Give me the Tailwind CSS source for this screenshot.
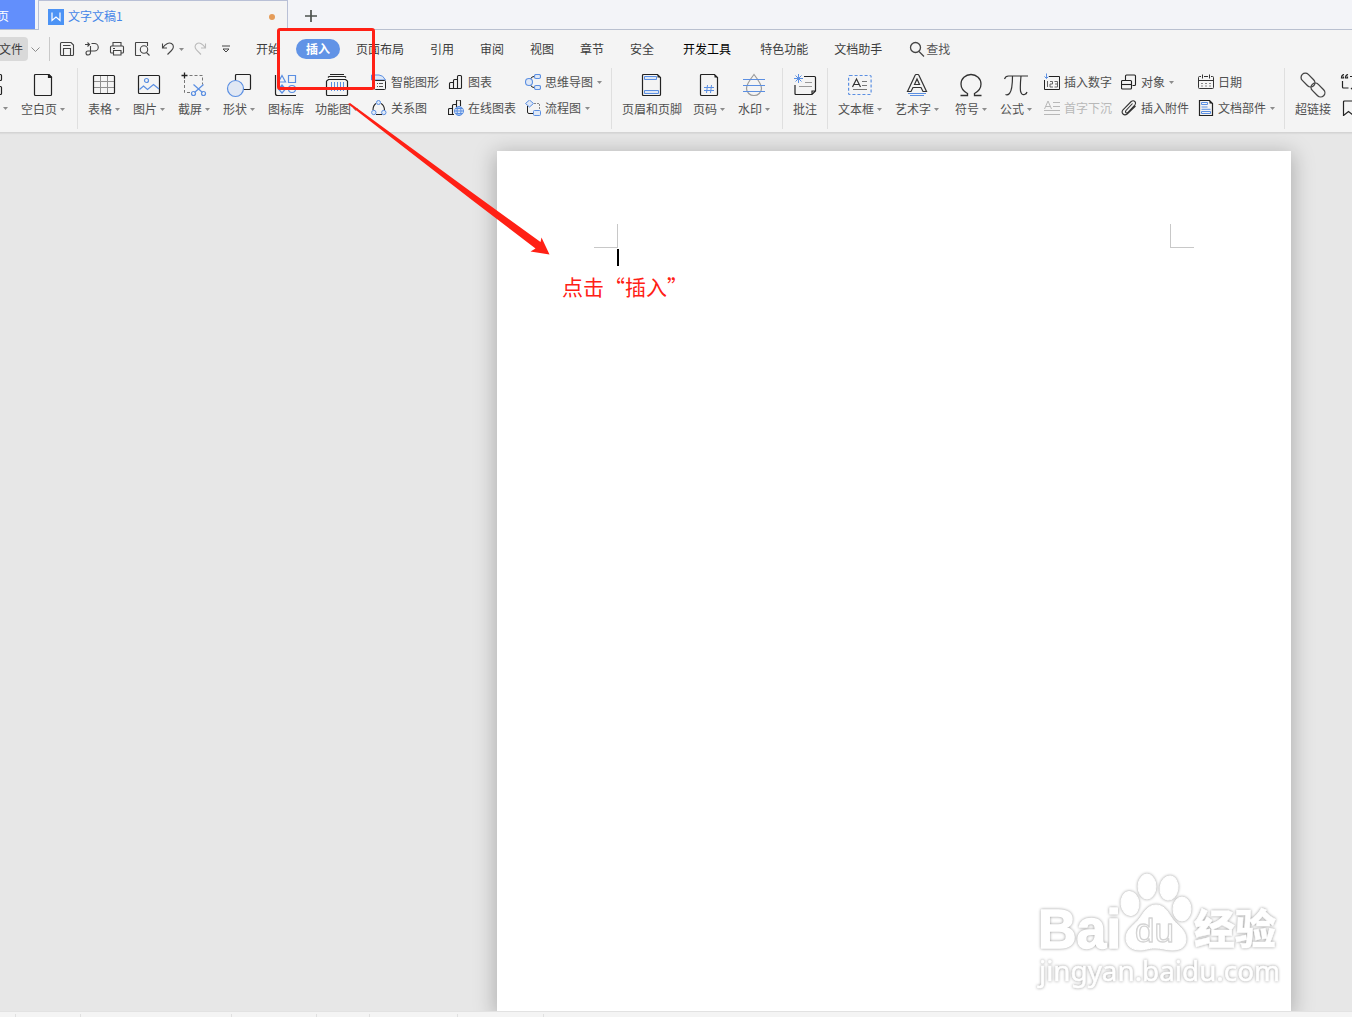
<!DOCTYPE html>
<html lang="zh-CN">
<head>
    <meta charset="UTF-8">
    <meta name="viewport" content="width=device-width, initial-scale=1.0">
    <title>文字文稿1</title>
    <script src="https://cdn.jsdelivr.net/npm/@tailwindcss/browser@4"></script>
</head>
<body class="relative flex h-[1017px] w-[1352px] flex-col overflow-hidden bg-[#e7e7e7] font-['Noto_Sans_CJK_SC',sans-serif] text-[12px] leading-4 whitespace-nowrap text-[#505050]">
    <svg class="hidden">
        <symbol id="caret" viewBox="0 0 5 3"><path d="M0 0h5L2.5 3z" fill="#8c8c8c"/></symbol>
    </svg>

    <!-- Document tabs -->
    <div class="flex h-[30px] shrink-0 border-b border-[#b9c0d0] bg-[#f3f4f8]">
        <div class="flex h-[29px] w-[35px] items-center bg-[#628ffc] pt-[2px] text-white"><span class="-ml-[3px]">页</span></div>
        <div class="ml-[3px] flex h-[30px] w-[250px] items-center border-x border-t border-[#b9c0d6] bg-[#f4f4f4] pr-3 pl-[9px] pt-[2px]">
            <svg class="size-4" viewBox="0 0 16 16" fill="none"><path d="M0 0h16v16H0z" fill="#4c93f5"/><path d="M4 3.500v8L8 8l4 3.500v-8" stroke="#fff" stroke-width="1.2"/></svg>
            <span class="mb-[2px] ml-1 text-[#4586e8]">文字文稿1</span>
            <span class="ml-auto size-1.5 rounded-full bg-[#e59c58]"></span>
        </div>
        <svg class="mt-[10px] ml-[17px] size-3" viewBox="0 0 12 12"><path d="M6 0v12M0 6h12" stroke="#4c514e" stroke-width="1.7"/></svg>
    </div>

    <!-- Menu bar -->
    <div class="flex h-[38px] shrink-0 items-center bg-[#f4f4f4] text-[#3c3c3c]">
        <div class="flex h-6 w-7 items-center rounded-r bg-[#d9d9d9]"><span class="-ml-px">文件</span></div>
        <svg class="ml-[3px] h-[5px] w-[9px]" viewBox="0 0 9 5" fill="none" stroke="#8c8c8c"><path d="M.5.5l4 4 4-4"/></svg>
        <div class="ml-[9px] h-6 w-px bg-[#c9c9c9]"></div>
        <svg class="ml-[9px] h-4 w-4" viewBox="0 0 16 16" fill="none" stroke="#444" stroke-width="1.100"><path d="M2.500 1.500H12l2.500 2.500v9.500q0 1-1 1h-11q-1 0-1-1v-11q0-1 1-1zM4 4.500h7.500M4.500 14V7.500h7V14"/></svg>
        <svg class="ml-[9px] h-4 w-4" viewBox="0 0 16 16" fill="none" stroke="#444" stroke-width="1.100"><path d="M1 3.500h4.500M3.500 1.500l2 2-2 2M7.500 2.500h3a3.500 3.500 0 0 1 0 7.500H4a2 2 0 0 0 0 4q2.500 0 2.500-2.500V5"/></svg>
        <svg class="ml-[9px] h-4 w-4" viewBox="0 0 16 16" fill="none" stroke="#444" stroke-width="1.100"><path d="M4 5V1.500h8V5M4 12H2.500Q1.500 12 1.500 11V6q0-1 1-1h11q1 0 1 1v5q0 1-1 1H12M4.500 9.500h7.500v4.500H4.500zM4 7.500h2"/></svg>
        <svg class="ml-[9px] h-4 w-4" viewBox="0 0 16 16" fill="none" stroke="#444" stroke-width="1.100"><path d="M7 14.500H2q-.5 0-.5-.5V2q0-.5.500-.5h11.500V5"/><circle cx="10" cy="8.500" r="3.700"/><path d="M12.500 11.500l3 3"/></svg>
        <svg class="ml-[11px] h-4 w-4" viewBox="0 0 16 16" fill="none" stroke="#444" stroke-width="1.100"><path d="M1.500 2.500V7h4.500M1.800 6.800C4 3 8 1 10.500 2.500c3 2 2 5 0 7L6.500 13.500"/></svg>
        <svg class="ml-[2px] h-[3px] w-[5px]"><use href="#caret"/></svg>
        <svg class="ml-[9px] h-4 w-4" viewBox="0 0 16 16" fill="none" stroke="#bbb" stroke-width="1.100"><path d="M12.500 2.500V7H8M12.200 6.800C10 3 6.500 1 4 2.500c-3 2-2 4.500-.5 6.500l4.500 4.500"/></svg>
        <svg class="ml-[13px] h-2 w-2" viewBox="0 0 8 8" fill="none" stroke="#444"><path d="M0 1h8M1 4h6L4 7z"/></svg>
        <span class="ml-[26px]">开始</span>
        <span class="ml-4 flex h-5 w-11 items-center justify-center rounded-full bg-[#6193e6] font-bold text-white">插入</span>
        <span class="ml-4">页面布局</span>
        <span class="ml-[26px]">引用</span>
        <span class="ml-[26px]">审阅</span>
        <span class="ml-[26px]">视图</span>
        <span class="ml-[26px]">章节</span>
        <span class="ml-[26px]">安全</span>
        <span class="ml-[29px] text-black">开发工具</span>
        <span class="ml-[29px]">特色功能</span>
        <span class="ml-[26px]">文档助手</span>
        <svg class="ml-[27px] size-4" viewBox="0 0 16 16" fill="none" stroke="#444" stroke-width="1.300"><circle cx="6.500" cy="6.500" r="5"/><path d="M10 10.500l5 5"/></svg>
        <span class="ml-px text-[#555]">查找</span>
    </div>

    <!-- Ribbon -->
    <div class="flex h-[65px] shrink-0 border-b border-[#d4d4d4] bg-[#f4f4f4] shadow-[0_1px_1px_#dcdcdc]">
        <div class="flex w-2 flex-col items-start pt-[5px]">
            <svg class="-ml-[10px] h-6 w-6" viewBox="0 0 24 24" fill="none" stroke="#222" stroke-width="1.200"><path d="M3 1.500h7.500q1 0 1 1v4q0 1-1 1H3M3 13.500h7.500q1 0 1 1v6q0 1-1 1H3"/></svg>
            <svg class="mt-[10px] ml-[3px] h-[3px] w-[5px]"><use href="#caret"/></svg>
        </div>
        <div class="ml-[13px] flex flex-col items-center pt-[5px]">
            <svg class="size-6" viewBox="0 0 24 24" fill="none" stroke="#222" stroke-width="1.200"><path d="M4.500 1.500h13l3 3v17q0 1-1 1h-15q-1 0-1-1v-19q0-1 1-1z"/><path d="M17.500 1.500h.5l2.500 2.500v.5h-3z" fill="#222"/></svg>
            <span class="mt-1 flex items-center gap-[3px]">空白页<svg class="h-[3px] w-[5px]"><use href="#caret"/></svg></span>
        </div>
        <div class="ml-3 h-[61px] w-px bg-[#dfdfdf]"></div>

        <div class="ml-[10px] flex flex-col items-center pt-[5px]">
            <svg class="size-6" viewBox="0 0 24 24" fill="none"><path d="M1.500 8.500h21M1.500 14.500h21M8.500 2.500v12M15.500 8.500v12M8.500 14.500v6M15.500 2.500v6" stroke="#909090"/><rect x="1.500" y="2.500" width="21" height="18" rx="1" stroke="#222" stroke-width="1.200"/></svg>
            <span class="mt-1 flex items-center gap-[3px]">表格<svg class="h-[3px] w-[5px]"><use href="#caret"/></svg></span>
        </div>
        <div class="ml-[13px] flex flex-col items-center pt-[5px]">
            <svg class="size-6" viewBox="0 0 24 24" fill="none"><rect x="1.500" y="2.500" width="21" height="18" rx="1" stroke="#222" stroke-width="1.200"/><path d="M2.500 16.500l4-3.500 4 3.500 6-5 5.500 4.500" stroke="#5b8fe2" stroke-width="1.200"/><circle cx="9.500" cy="7.500" r="2" stroke="#5b8fe2" stroke-width="1.200"/></svg>
            <span class="mt-1 flex items-center gap-[3px]">图片<svg class="h-[3px] w-[5px]"><use href="#caret"/></svg></span>
        </div>
        <div class="ml-[13px] flex flex-col items-center pt-[5px]">
            <svg class="size-6 overflow-visible" viewBox="0 0 24 24" fill="none"><path d="M7.500 2.500h13v9M2.500 7v12.500h6" stroke="#777" stroke-dasharray="3 2"/><path d="M2.500-.5v6M-.5 2.500h6" stroke="#222" stroke-width="1.300"/><g stroke="#5b8fe2" stroke-width="1.200"><path d="M11.500 11.500l9 8M21.500 11.500l-9 8"/><circle cx="11.500" cy="20.500" r="2"/><circle cx="21.500" cy="20.500" r="2"/></g></svg>
            <span class="mt-1 flex items-center gap-[3px]">截屏<svg class="h-[3px] w-[5px]"><use href="#caret"/></svg></span>
        </div>
        <div class="ml-[13px] flex flex-col items-center pt-[5px]">
            <svg class="size-6 overflow-visible" viewBox="0 0 24 24" fill="none"><rect x="8.500" y="1.500" width="15" height="15" rx="1" stroke="#222" stroke-width="1.200"/><circle cx="8.500" cy="15.500" r="8" fill="#e1e8f4" stroke="#5b8fe2" stroke-width="1.200"/></svg>
            <span class="mt-1 flex items-center gap-[3px]">形状<svg class="h-[3px] w-[5px]"><use href="#caret"/></svg></span>
        </div>
        <div class="ml-[13px] flex flex-col items-center pt-[5px]">
            <svg class="size-6" viewBox="0 0 24 24" fill="none"><path d="M1.500 2v18.500q0 2 2 2H22" stroke="#222" stroke-width="1.200"/><g stroke="#5b8fe2" stroke-width="1.200"><path d="M8 2.500l3.500 6.500h-7zM14.500 2.500h7v7h-7zM8 12l3.500 4L8 20l-3.500-4z"/><circle cx="18" cy="16" r="3.500"/></g></svg>
            <span class="mt-1">图标库</span>
        </div>
        <div class="ml-[11px] flex flex-col items-center pt-[5px]">
            <svg class="size-6" viewBox="0 0 24 24" fill="none"><path d="M5 1.500h14M3 4.500l1-1h16l1 1M1.500 8l2-1.500h17l2 1.500M1.500 8v13.500q0 1 1 1h19q1 0 1-1V8" stroke="#222" stroke-width="1.200"/><path d="M6.500 9v9M9.500 9v9M12.500 9v9M15.500 9v9M18.500 9v9" stroke="#5b8fe2"/></svg>
            <span class="mt-1 flex items-center gap-[2px]">功能图<svg class="h-[3px] w-[5px]"><use href="#caret"/></svg></span>
        </div>

        <div class="ml-[13px] flex flex-col gap-[10px] pt-[6px]">
            <div class="flex items-center gap-1">
                <svg class="size-4" viewBox="0 0 16 16" fill="none"><path d="M.5 1H8q4 0 6.500 5H.5z" fill="#dfe8f6" stroke="#5b8fe2"/><rect x="3.500" y="6.500" width="11" height="9" rx="1" fill="#f4f4f4" stroke="#222"/><path d="M6 9.500h1M8 9.500h4M6 12.500h1M8 12.500h4" stroke="#555"/></svg>智能图形
            </div>
            <div class="flex items-center gap-1">
                <svg class="size-4" viewBox="0 0 16 16" fill="none"><path d="M5 3.500Q2 5.500 2 10M10 3.500q3.500 2 3.500 7M5 14.500h6" stroke="#222" stroke-width="1.100"/><g fill="#dfe8f6" stroke="#5b8fe2"><circle cx="7.500" cy="2.500" r="2"/><circle cx="2.800" cy="12.500" r="2.200"/><circle cx="12.800" cy="12.500" r="2.200"/></g></svg>关系图
            </div>
        </div>
        <div class="ml-[9px] flex flex-col gap-[10px] pt-[6px]">
            <div class="flex items-center gap-1">
                <svg class="size-4" viewBox="0 0 16 16" fill="none" stroke="#222" stroke-width="1.100"><path d="M1.500 14.500v-5q0-1 1-1h3v6zM5.500 14.500v-8q0-1 1-1h3v9zM9.500 14.500V2.500q0-1 1-1h2q1 0 1 1v11q0 1-1 1z"/></svg>图表
            </div>
            <div class="flex items-center gap-1">
                <svg class="size-4" viewBox="0 0 16 16" fill="none"><path d="M6 14.500H.5v-5q0-1 1-1h3v6M4.500 9V5.500q0-1 1-1h3V7M8.500 6V1q0-1 1-1h2q1 0 1 1v5" stroke="#222" stroke-width="1.100"/><g stroke="#5b8fe2"><circle cx="11" cy="11" r="4.500" fill="#dfe8f6"/><ellipse cx="11" cy="11" rx="2" ry="4.500"/><path d="M6.500 11h9M7.500 8.500h7M7.500 13.500h7"/></g></svg>在线图表
            </div>
        </div>
        <div class="ml-[9px] flex flex-col gap-[10px] pt-[6px]">
            <div class="flex items-center">
                <svg class="size-4" viewBox="0 0 16 16" fill="none"><path d="M5.500 5Q6.500 2.500 9 2.500M5.500 11q1 2.500 3.500 2.500" stroke="#222"/><g fill="#dfe8f6" stroke="#5b8fe2" stroke-width="1.100"><circle cx="4" cy="8" r="3.500"/><rect x="9.500" y=".5" width="6" height="4" rx="1.500"/><rect x="9.500" y="11.500" width="6" height="4" rx="1.500"/></g></svg>
                <span class="ml-1">思维导图</span><svg class="ml-1 h-[3px] w-[5px]"><use href="#caret"/></svg>
            </div>
            <div class="flex items-center">
                <svg class="size-4" viewBox="0 0 16 16" fill="none"><path d="M2.500 6v6q0 1.500 1.500 1.500h4" stroke="#222"/><path d="M9 3.500h5.500v6" stroke="#888" stroke-dasharray="2 1"/><g fill="#dfe8f6" stroke="#5b8fe2"><path d="M4.500 0L8.500 3.500l-4 3.500L.5 3.500z"/><rect x="8.500" y="10.500" width="7" height="5" rx="1"/></g></svg>
                <span class="ml-1">流程图</span><svg class="ml-1 h-[3px] w-[5px]"><use href="#caret"/></svg>
            </div>
        </div>
        <div class="ml-[9px] h-[61px] w-px bg-[#dfdfdf]"></div>

        <div class="ml-[10px] flex flex-col items-center pt-[5px]">
            <svg class="size-6" viewBox="0 0 24 24" fill="none"><path d="M3.500 1.500h14l3 3v17q0 1-1 1h-16q-1 0-1-1v-19q0-1 1-1z" stroke="#222" stroke-width="1.200"/><path d="M17.500 1.500l3 3h-3z" fill="#222"/><path d="M4.500 3.500h12v3h-12zM4.500 17.500h14v3h-14z" fill="#dfe8f6" stroke="#5b8fe2"/></svg>
            <span class="mt-1">页眉和页脚</span>
        </div>
        <div class="ml-[11px] flex flex-col items-center pt-[5px]">
            <svg class="size-6" viewBox="0 0 24 24" fill="none"><path d="M4.500 1.500h13l3 3v17q0 1-1 1h-15q-1 0-1-1v-19q0-1 1-1z" stroke="#222" stroke-width="1.200"/><path d="M17.500 1.500l3 3h-3z" fill="#222"/><path d="M7 14.500h10M7 17.500h10M10.500 12l-1 8M14.500 12l-1 8" stroke="#5b8fe2"/></svg>
            <span class="mt-1 flex items-center gap-[3px]">页码<svg class="h-[3px] w-[5px]"><use href="#caret"/></svg></span>
        </div>
        <div class="ml-[13px] flex flex-col items-center pt-[5px]">
            <svg class="size-6" viewBox="0 0 24 24" fill="none"><path d="M12 1.500Q4.500 11 4.500 15.500a7.500 7 0 0 0 15 0Q19.500 11 12 1.500z" stroke="#999" stroke-width="1.200"/><path d="M1 6.500h22M1 12.500h22M1 18.500h22" stroke="#5b8fe2" stroke-width="1.100"/></svg>
            <span class="mt-1 flex items-center gap-[3px]">水印<svg class="h-[3px] w-[5px]"><use href="#caret"/></svg></span>
        </div>
        <div class="ml-3 h-[61px] w-px bg-[#dfdfdf]"></div>

        <div class="ml-[10px] flex flex-col items-center pt-[5px]">
            <svg class="size-6" viewBox="0 0 24 24" fill="none"><path d="M11 3.500h10.500q1 0 1 1V18L19 21.500H3q-1 0-1-1V12M19 21.500V18h3.500" stroke="#222" stroke-width="1.200"/><path d="M12 9.500h7M6 13.500h13" stroke="#999"/><path d="M5.500 1v9M1 5.500h9M2.500 2.500l6 6M8.500 2.500l-6 6" stroke="#5b8fe2"/></svg>
            <span class="mt-1">批注</span>
        </div>
        <div class="ml-[10px] h-[61px] w-px bg-[#dfdfdf]"></div>

        <div class="ml-[10px] flex flex-col items-center pt-[5px]">
            <svg class="size-6" viewBox="0 0 24 24" fill="none"><rect x=".6" y="2.500" width="22.500" height="19" rx="1" stroke="#5b8fe2" stroke-width="1.200" stroke-dasharray="3 2"/><path d="M4.500 14l4-8 4 8M6 11.500h5" stroke="#333" stroke-width="1.200"/><path d="M14 8.500h5M14 12.500h5M5 16.500h14" stroke="#777"/></svg>
            <span class="mt-1 flex items-center gap-[3px]">文本框<svg class="h-[3px] w-[5px]"><use href="#caret"/></svg></span>
        </div>
        <div class="ml-[13px] flex flex-col items-center pt-[5px]">
            <svg class="size-6" viewBox="0 0 24 24" fill="none"><path d="M2.500 18.500l7.500-16q.5-1 1-1h2q.5 0 1 1l7.500 16H18l-2-4H8l-2 4zM9.500 11.500L12 6l2.500 5.500z" stroke="#333" stroke-width="1.200"/><path d="M3 20.500h18M5 22.500h14" stroke="#5b8fe2" stroke-width="1.100"/></svg>
            <span class="mt-1 flex items-center gap-[3px]">艺术字<svg class="h-[3px] w-[5px]"><use href="#caret"/></svg></span>
        </div>
        <div class="ml-4 flex flex-col items-center pt-[5px]">
            <svg class="size-6" viewBox="0 0 24 24" fill="none"><path d="M1.500 22.500h7v-2Q2 17 2 11a10 9.500 0 0 1 20 0q0 6-6.500 9.500v2h7" stroke="#333" stroke-width="1.300"/></svg>
            <span class="mt-1 flex items-center gap-[3px]">符号<svg class="h-[3px] w-[5px]"><use href="#caret"/></svg></span>
        </div>
        <div class="ml-[13px] flex flex-col items-center pt-[5px]">
            <svg class="size-6 overflow-visible" viewBox="0 0 24 24" fill="none"><path d="M.5 6q1-3 4-3H24M8.500 3q0 14-3 17.500-2 2-4 1M17 3q-1 10-.5 15 1 4.500 4 3.500 2-.5 2.500-2.500" stroke="#333" stroke-width="1.200"/></svg>
            <span class="mt-1 flex items-center gap-[3px]">公式<svg class="h-[3px] w-[5px]"><use href="#caret"/></svg></span>
        </div>

        <div class="ml-3 flex flex-col gap-[10px] pt-[6px]">
            <div class="flex items-center gap-1">
                <svg class="size-4 overflow-visible" viewBox="0 0 16 16" fill="none"><path d="M5 2.500h10.500v13H.5V6" stroke="#222"/><path d="M2.500-.5v5M.5 2.500l2 2 2-2" stroke="#5b8fe2"/><path d="M3.500 7v6M6 7.500h2.500v2.500H6v3h3M10.500 7.500h3v5.500h-3M11 10h2.500" stroke="#555" stroke-width=".9"/></svg>插入数字
            </div>
            <div class="flex items-center gap-1 text-[#b8b8b8]">
                <svg class="size-4" viewBox="0 0 16 16" fill="none" stroke="#b8b8b8"><path d="M.5 9l3.500-8 3.500 8M2 6.500h4M9 2.500h7M9 6.500h7M0 10.500h16M0 14.500h16"/></svg>首字下沉
            </div>
        </div>
        <div class="ml-[9px] flex flex-col gap-[10px] pt-[6px]">
            <div class="flex items-center">
                <svg class="size-4" viewBox="0 0 16 16" fill="none" stroke="#222" stroke-width="1.100"><path d="M4.500 6V2q0-1 1-1h8q1 0 1 1v8.500q0 1-1 1h-2"/><rect x=".5" y="6.500" width="10" height="8.500" rx="1"/><path d="M.5 10.500h10"/></svg>
                <span class="ml-1">对象</span><svg class="ml-1 h-[3px] w-[5px]"><use href="#caret"/></svg>
            </div>
            <div class="flex items-center gap-1">
                <svg class="size-4" viewBox="0 0 16 16" fill="none" stroke="#333" stroke-width="1.100"><path d="M11.500 3.500L5 10.500q-1 1.500 0 2.200t2-.4L13.800 5q1.500-2 0-3.500t-3.600 0L2 9.800q-1.800 2.500 0 4.200t4.200 0L14.500 6"/></svg>插入附件
            </div>
        </div>
        <div class="ml-[9px] flex flex-col gap-[10px] pt-[6px]">
            <div class="flex items-center gap-1">
                <svg class="size-4" viewBox="0 0 16 16" fill="none" stroke="#333"><path d="M3 2.500H1.500q-1 0-1 1v10q0 1 1 1h13q1 0 1-1v-10q0-1-1-1H13M6 2.500h4M4.500.5v4M11.500.5v4M.5 6.500h15"/><path d="M3 9.500h2M7 9.500h2M11 9.500h2M3 12h2M7 12h2M11 12h2" stroke="#888"/></svg>日期
            </div>
            <div class="flex items-center">
                <svg class="size-4" viewBox="0 0 16 16" fill="none"><path d="M1.500.5h10l3 3v12h-13z" stroke="#222" stroke-width="1.200"/><path d="M11.500.5v3h3z" fill="#222"/><path d="M3.500 2.500h6v2h-6zM3.500 11.500h9v2h-9zM3.500 7h6M3.500 9.300h9" stroke="#5b8fe2"/></svg>
                <span class="ml-1">文档部件</span><svg class="ml-1 h-[3px] w-[5px]"><use href="#caret"/></svg>
            </div>
        </div>
        <div class="ml-[9px] h-[61px] w-px bg-[#dfdfdf]"></div>

        <div class="ml-[10px] flex flex-col items-center pt-[5px]">
            <svg class="size-6 overflow-visible" viewBox="0 0 24 24" fill="none" stroke="#444" stroke-width="1.300"><rect x="-1" y="2.800" width="16" height="8.500" rx="4.250" transform="rotate(45 7 7)"/><rect x="9" y="12.800" width="16" height="8.500" rx="4.250" transform="rotate(45 17 17)"/></svg>
            <span class="mt-1">超链接</span>
        </div>
        <div class="ml-[9px] flex w-3 shrink-0 flex-col gap-[10px] overflow-hidden pt-[6px]">
            <svg class="size-4 shrink-0" viewBox="0 0 16 16" fill="none"><path d="M4 .5Q1.500 1 1.500 4h2V2.500M8 .5Q5.500 1 5.500 4h2V2.500M10 2.500h5M2.500 7v6q0 1 1 1h5M11 14l2 2" stroke="#222" stroke-width="1.200"/></svg>
            <svg class="size-4 shrink-0" viewBox="0 0 16 16" fill="none"><path d="M3.500 15.500V2q0-1 1-1h9v14.500l-5-4z" stroke="#222" stroke-width="1.200"/></svg>
        </div>
    </div>

    <!-- Workspace -->
    <main class="min-h-0 flex-1 overflow-hidden pt-[18px]">
        <div class="relative ml-[497px] h-[860px] w-[794px] bg-white shadow-[0_4px_20px_2px_rgba(0,0,0,0.25)]">
            <div class="absolute top-[73px] left-[97px] h-6 w-6 border-r border-b border-[#c8c8c8]"></div>
            <div class="absolute top-[73px] left-[673px] h-6 w-6 border-b border-l border-[#c8c8c8]"></div>
            <div class="absolute top-[98px] left-[120px] h-[17px] w-[2px] bg-black"></div>
            <p class="absolute top-[120px] left-[65px] text-[21px] leading-[30px] text-[#ff2015]">点击“插入”</p>
            <svg class="absolute top-[709px] left-[523px] h-[150px] w-[270px] drop-shadow-[0_0_1.5px_rgba(0,0,0,0.4)]" viewBox="1020 860 270 150" fill="#fff" stroke="#fff" stroke-linejoin="round">
                <text x="1038" y="948" font-family="Liberation Sans" font-weight="700" font-size="56" textLength="83" lengthAdjust="spacingAndGlyphs" stroke-width="1.500">Bai</text>
                <ellipse cx="1130" cy="903.500" rx="9" ry="12" transform="rotate(-6 1130 903.500)"/>
                <ellipse cx="1147" cy="886.500" rx="9" ry="12.500"/>
                <ellipse cx="1169" cy="888" rx="9" ry="12" transform="rotate(8 1169 888)"/>
                <ellipse cx="1182" cy="909" rx="9" ry="12"/>
                <path d="M1156 905c7 0 11 5 15 12 5 8 15 12 15 22 0 9-7 11-14 11-6 0-10-2-17-2s-9 2-15 2c-9 0-14-5-14-12 0-9 9-13 14-20 4-6 8-13 16-13z"/>
                <text x="1194" y="944" font-family="Noto Sans CJK SC" font-weight="900" font-size="41" textLength="82" stroke-width=".5">经验</text>
                <text x="1039" y="981" font-family="Noto Sans" font-size="28" textLength="241" lengthAdjust="spacingAndGlyphs" stroke-width=".6">jingyan.baidu.com</text>
                <text x="1135" y="942" font-family="Liberation Sans" font-weight="400" font-size="34" textLength="39" lengthAdjust="spacingAndGlyphs" stroke="#d4d4d4" stroke-width="1.300">du</text>
            </svg>
        </div>
    </main>

    <!-- Status bar -->
    <footer class="h-[6px] shrink-0 border-t border-[#e2e2e2] bg-[#f4f4f4] pt-[2px]">
        <div class="flex h-full">
            <i class="ml-[15px] w-px bg-[#e0e0e0]"></i>
            <i class="ml-16 w-px bg-[#e0e0e0]"></i>
            <i class="ml-[150px] w-px bg-[#e0e0e0]"></i>
            <i class="ml-[84px] w-px bg-[#e0e0e0]"></i>
            <i class="ml-[52px] w-px bg-[#e0e0e0]"></i>
            <i class="ml-[87px] w-px bg-[#e0e0e0]"></i>
            <i class="ml-[85px] w-px bg-[#e0e0e0]"></i>
        </div>
    </footer>

    <!-- Callout box and arrow -->
    <div class="absolute top-[28px] left-[277px] h-[62px] w-[98px] rounded-[3px] border-3 border-[#ff2015]"></div>
    <svg class="pointer-events-none absolute top-[95px] left-[340px] h-[165px] w-[215px]" viewBox="340 95 215 165" fill="#ff2015"><path d="M350 103L470 191l70.500 51 1-4.500 8 17-19-3 5-3L470 198.500 348 104z"/></svg>
</body>
</html>
